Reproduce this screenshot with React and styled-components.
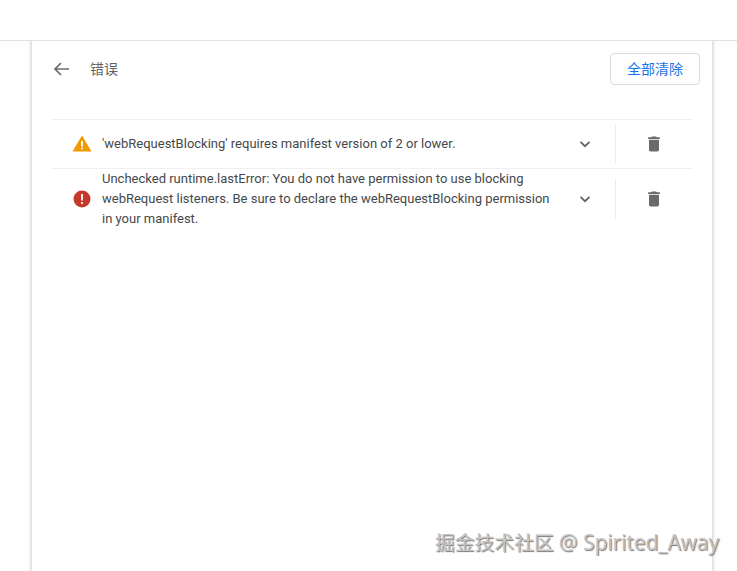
import React from 'react';
import styled, { createGlobalStyle } from 'styled-components';

const GlobalStyle = createGlobalStyle`
  html, body {
    margin: 0;
    height: 100%;
    background: #fff;
    overflow: hidden;
  }
  body {
    font-family: Roboto, "Noto Sans CJK SC", sans-serif;
  }
`;

const Page = styled.div`
  position: relative;
  width: 737px;
  height: 571px;
  overflow: hidden;
  display: flex;
  flex-direction: column;
`;

const TopBar = styled.div`
  height: 40px;
  flex: none;
  background: #fff;
  border-bottom: 1px solid #e0e0e0;
  position: relative;
  z-index: 1;
`;

const Body = styled.div`
  flex: 1;
  padding-left: 32px;
  display: flex;
  background: #fefefe;
`;

const Card = styled.div`
  width: 680px;
  box-sizing: border-box;
  background: #fff;
  box-shadow: 0 0 3px 1px rgba(60, 64, 67, 0.25);
  padding: 12px 12px 0 20px;
`;

const CardHeader = styled.div`
  display: flex;
  align-items: center;
  height: 32px;
  margin-bottom: 34px;
`;

const BackButton = styled.svg`
  width: 20px;
  height: 20px;
  flex: none;
  margin-left: -1px;
  color: #6a6d70;
`;

const Title = styled.h1`
  margin: -3px 0 0 19px;
  flex: 1;
  font-size: 14px;
  font-weight: 400;
  color: #5f6368;
`;

const ClearButton = styled.button`
  width: 90px;
  height: 32px;
  box-sizing: border-box;
  border: 1px solid #dadce0;
  border-radius: 4px;
  background: #fff;
  color: #1a73e8;
  font-family: inherit;
  font-size: 14px;
  padding: 0 0 3px;
`;

const List = styled.ul`
  list-style: none;
  margin: 0;
  padding: 0;
  width: 640px;
`;

const Row = styled.li`
  display: flex;
  align-items: center;
  border-top: 1px solid #f0f0f0;
  min-height: 48px;
  padding-left: 20px;
`;

const SeverityIcon = styled.svg`
  width: 20px;
  height: 20px;
  flex: none;
`;

const Message = styled.div`
  width: 456px;
  flex: none;
  margin-left: 10px;
  font-size: 13px;
  line-height: 20px;
  color: #45484b;
`;

const Chevron = styled.svg`
  width: 18px;
  height: 18px;
  flex: none;
  margin-left: 18px;
  color: #5f6368;
`;

const Actions = styled.div`
  flex: none;
  margin-left: 21px;
  width: 75px;
  height: 40px;
  border-left: 1px solid #eeeeee;
  display: flex;
  align-items: center;
  justify-content: center;
`;

const Trash = styled.svg`
  width: 20px;
  height: 20px;
  color: #686b6e;
`;

const Watermark = styled.div`
  position: absolute;
  left: 435px;
  top: 529px;
  font-size: 19.8px;
  line-height: 26px;
  white-space: nowrap;
  color: #c4c4c4;
  text-shadow: 1px 1px 1px #777;
  font-family: "Open Sans", "Noto Sans CJK SC", sans-serif;
  z-index: 2;
`;

const WatermarkName = styled.span`
  font-size: 20.9px;
`;

const rows = [
  { id: 1, kind: 'warn', text: "'webRequestBlocking' requires manifest version of 2 or lower." },
  {
    id: 2,
    kind: 'error',
    text: 'Unchecked runtime.lastError: You do not have permission to use blocking webRequest listeners. Be sure to declare the webRequestBlocking permission in your manifest.',
  },
];

const WarnIcon = () => (
  <SeverityIcon viewBox="0 0 20 20">
    <path d="M10 1.5 L19.5 17.5 H0.5 Z" fill="#f29900" />
    <rect x="9.1" y="7" width="1.8" height="5.5" fill="#fff" />
    <rect x="9.1" y="13.5" width="1.8" height="1.8" fill="#fff" />
  </SeverityIcon>
);

const ErrorIcon = () => (
  <SeverityIcon viewBox="0 0 20 20">
    <circle cx="10" cy="10" r="8.5" fill="#c5392b" />
    <rect x="9.1" y="5" width="1.8" height="6.5" fill="#fff" />
    <rect x="9.1" y="13" width="1.8" height="1.9" fill="#fff" />
  </SeverityIcon>
);

const App = () => (
  <Page>
    <GlobalStyle />
    <TopBar />
    <Body>
      <Card>
        <CardHeader>
          <BackButton viewBox="0 0 20 20">
            <path d="M18 10 H5 M10 4 L4 10 L10 16" fill="none" stroke="currentColor" strokeWidth="1.7" />
          </BackButton>
          <Title>错误</Title>
          <ClearButton>全部清除</ClearButton>
        </CardHeader>
        <List>
          {rows.map((row) => (
            <Row key={row.id}>
              {row.kind === 'warn' ? <WarnIcon /> : <ErrorIcon />}
              <Message>{row.text}</Message>
              <Chevron viewBox="0 0 18 18">
                <path d="M4.5 6.8 L9 11.2 L13.5 6.8" fill="none" stroke="currentColor" strokeWidth="1.7" />
              </Chevron>
              <Actions>
                <Trash viewBox="0 0 24 24">
                  <path d="M6 19c0 1.1.9 2 2 2h8c1.1 0 2-.9 2-2V7H6v12zM19 4h-3.5l-1-1h-5l-1 1H5v2h14V4z" fill="currentColor" />
                </Trash>
              </Actions>
            </Row>
          ))}
        </List>
      </Card>
    </Body>
    <Watermark>掘金技术社区 <WatermarkName>@ Spirited_Away</WatermarkName></Watermark>
  </Page>
);

export default App;
